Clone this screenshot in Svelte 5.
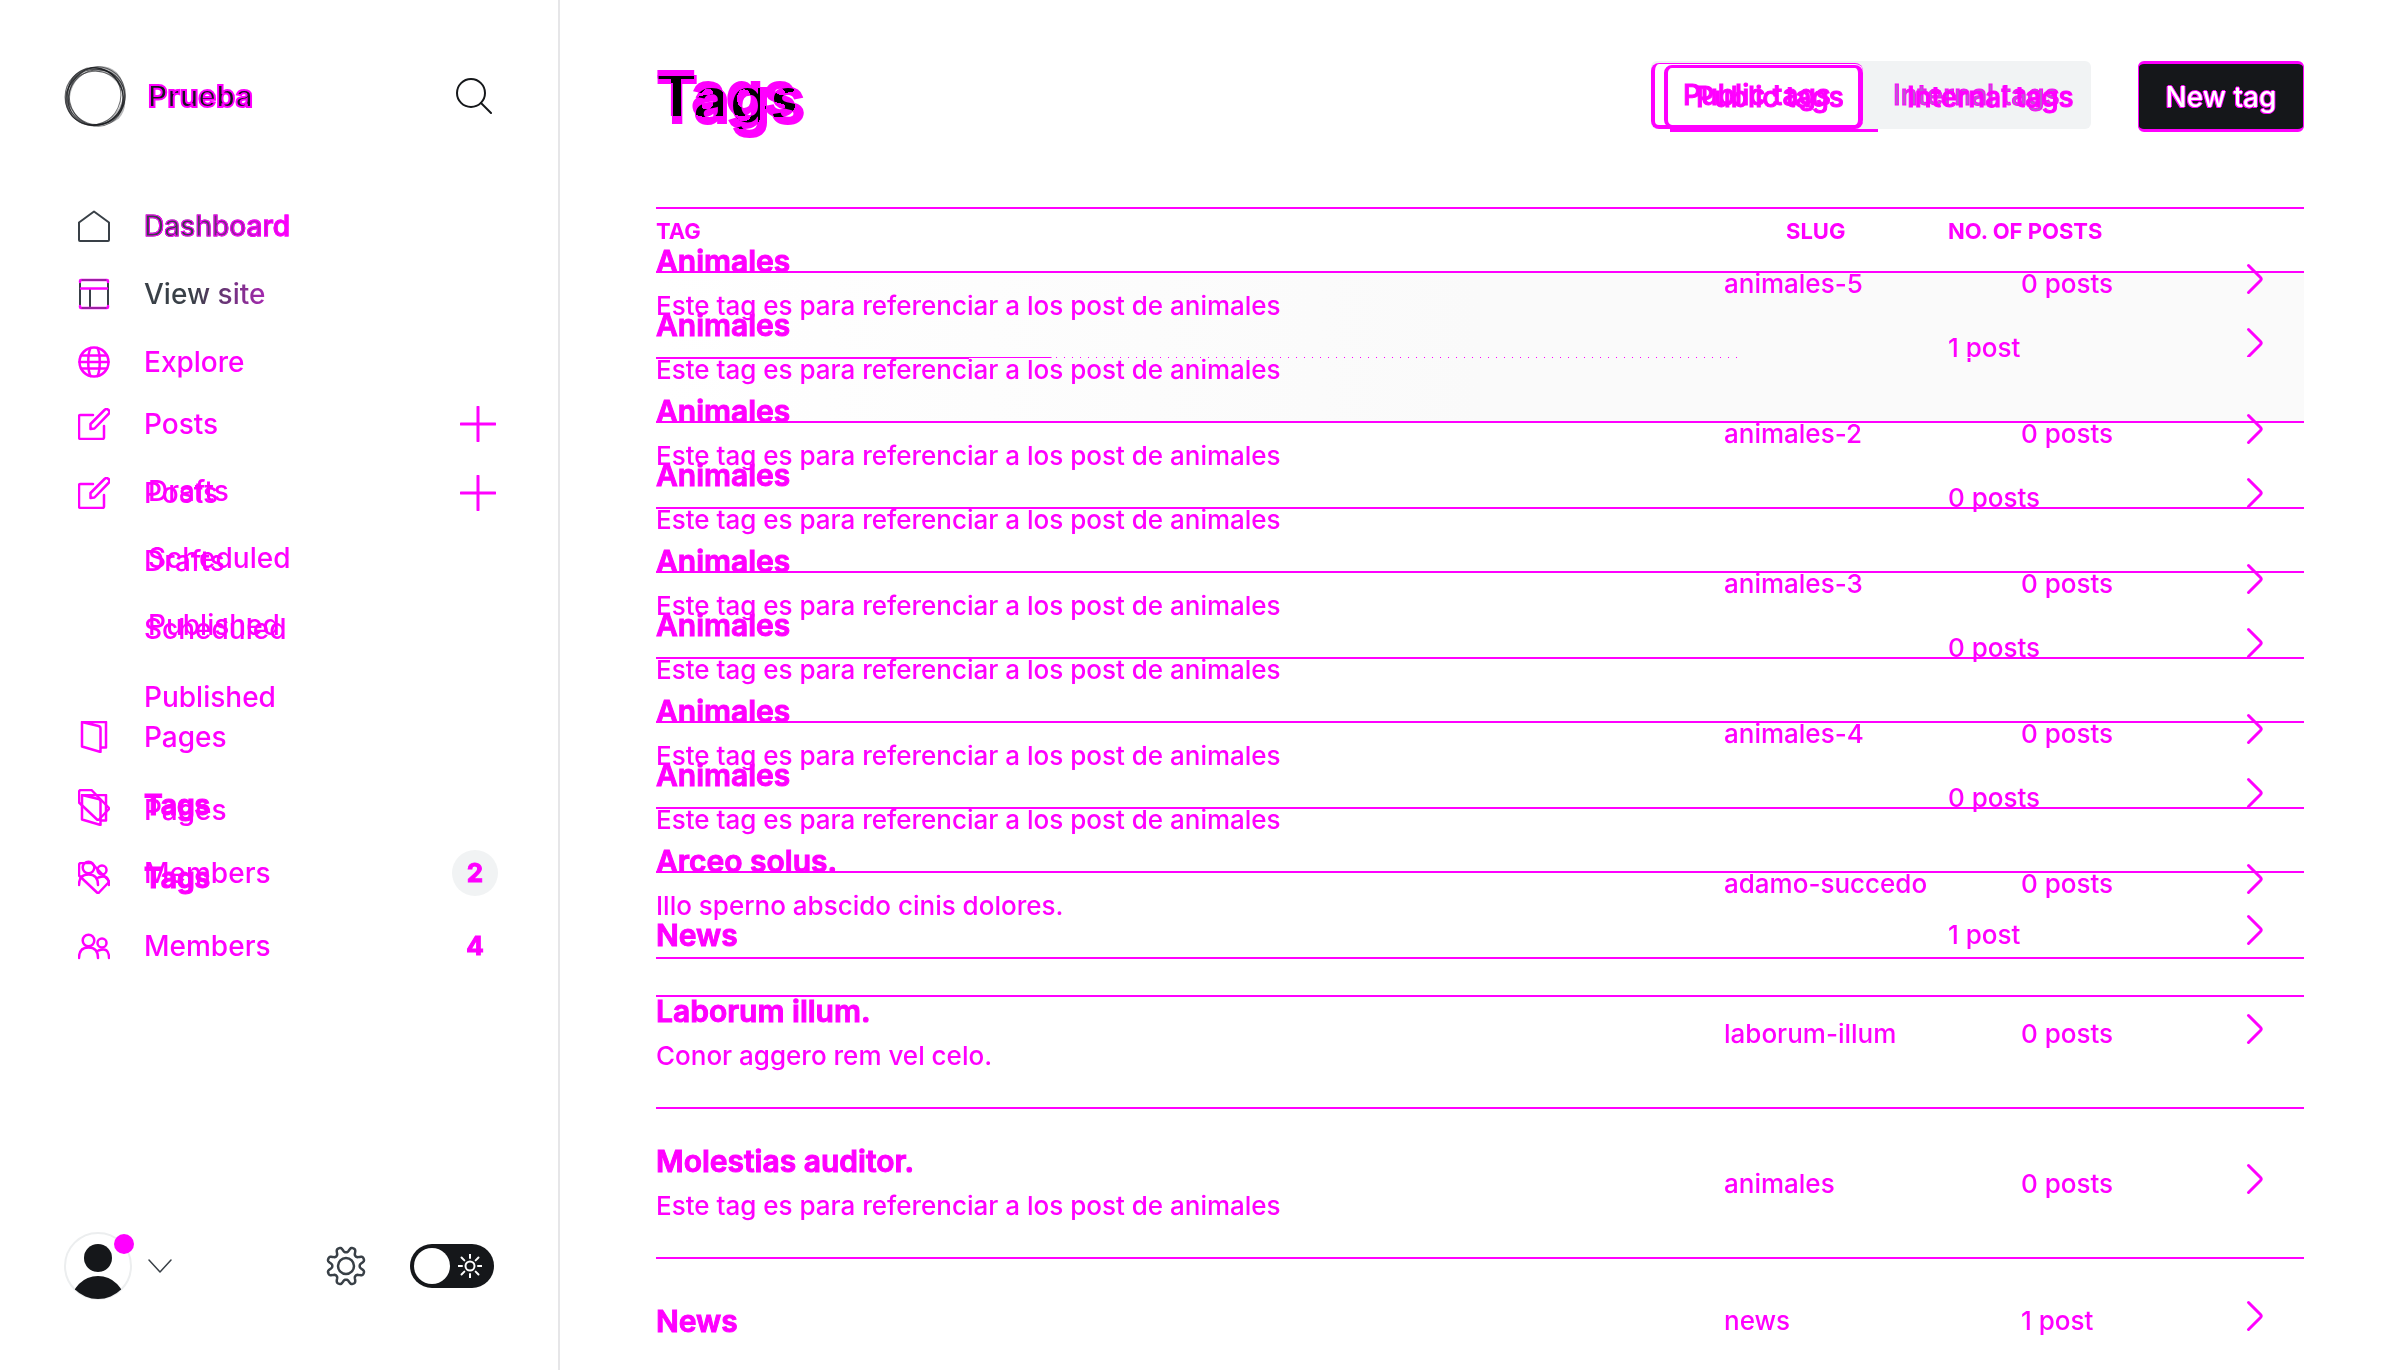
<script>
  const desc = 'Este tag es para referenciar a los post de animales';

  const navBefore = [
    {
      items: [
        { label: 'Posts', icon: 'edit', add: true },
        { label: 'Drafts', sub: true },
        { label: 'Scheduled', sub: true },
        { label: 'Published', sub: true }
      ]
    },
    {
      items: [
        { label: 'Pages', icon: 'pages' },
        { label: 'Tags', icon: 'tag', active: true },
        { label: 'Members', icon: 'members', count: '2', pill: true }
      ]
    }
  ];

  const navAfter = [
    {
      items: [
        { label: 'Dashboard', icon: 'home', tone: 'edged' },
        { label: 'View site', icon: 'layout', tone: 'grazed' },
        { label: 'Explore', icon: 'globe' }
      ]
    },
    {
      items: [
        { label: 'Posts', icon: 'edit', add: true },
        { label: 'Drafts' },
        { label: 'Scheduled' },
        { label: 'Published' }
      ]
    },
    {
      items: [
        { label: 'Pages', icon: 'pages' },
        { label: 'Tags', icon: 'tag', active: true },
        { label: 'Members', icon: 'members', count: '4' }
      ]
    }
  ];

  const rowsBefore = [
    { name: 'Animales', desc, posts: '1 post' },
    { name: 'Animales', desc, posts: '0 posts' },
    { name: 'Animales', desc, posts: '0 posts' },
    { name: 'Animales', desc, posts: '0 posts' },
    { name: 'News', posts: '1 post' }
  ];

  const rowsAfter = [
    { name: 'Animales', desc, slug: 'animales-5', posts: '0 posts' },
    { name: 'Animales', desc, slug: 'animales-2', posts: '0 posts' },
    { name: 'Animales', desc, slug: 'animales-3', posts: '0 posts' },
    { name: 'Animales', desc, slug: 'animales-4', posts: '0 posts' },
    { name: 'Arceo solus.', desc: 'Illo sperno abscido cinis dolores.', slug: 'adamo-succedo', posts: '0 posts' },
    { name: 'Laborum illum.', desc: 'Conor aggero rem vel celo.', slug: 'laborum-illum', posts: '0 posts' },
    { name: 'Molestias auditor.', desc, slug: 'animales', posts: '0 posts' },
    { name: 'News', slug: 'news', posts: '1 post' }
  ];

  // Eight rounded teeth with a notch at twelve o'clock.
  function gearPath() {
    const pts = [];
    for (let i = 0; i < 192; i++) {
      const t = (i / 192) * Math.PI * 2;
      const r = 16.4 - 2.7 * Math.tanh(1.6 * Math.cos(8 * t)) / Math.tanh(1.6);
      pts.push(`${(20 + r * Math.sin(t)).toFixed(2)} ${(20 - r * Math.cos(t)).toFixed(2)}`);
    }
    return 'M' + pts.join('L') + 'Z';
  }
  const gear = gearPath();
  const rays = [0, 45, 90, 135, 180, 225, 270, 315];
  const rings = [
    [29, 31, 28, 28, 0], [29, 31, 26, 28, 25], [32, 30, 26, 28, 50], [30, 31, 26, 29, -30],
    [31, 31, 28, 27, 0], [29, 32, 28, 26, -15], [32, 29, 27, 28, 20]
  ];
</script>

{#snippet icon(name)}
  <svg class="icon" viewBox="0 0 32 32" width="32" height="32" aria-hidden="true">
    {#if name === 'home'}
      <path class="ink" d="M1 12.5 16 1.5 31 12.5V30a1 1 0 0 1-1 1H2a1 1 0 0 1-1-1Z" />
    {:else if name === 'layout'}
      <path class="ink" d="M2 3v26M30 3v26M12 11v18" />
      <path class="hot" d="M2 4V3a1 1 0 0 1 1-1h26a1 1 0 0 1 1 1v1M2 28v1a1 1 0 0 0 1 1h26a1 1 0 0 0 1-1v-1M3 10.500h26" />
      <path class="ink thin" d="M4 2h24M4 30h24" />
    {:else if name === 'globe'}
      <circle class="hot" cx="16" cy="16" r="14.500" />
      <path class="hot" d="M3 9.500h26M1.500 16h29M3 22.500h26M12.500 2C9.500 8 9.500 24 12.500 30M19.500 2C22.500 8 22.500 24 19.500 30" />
    {:else if name === 'edit'}
      <path class="hot" d="M15 7H2.500A1.500 1.500 0 0 0 1 8.500v21A1.500 1.500 0 0 0 2.500 31h22a1.500 1.500 0 0 0 1.500-1.500V18" />
      <path class="hot" d="M12.500 21v-5L26.500 2a2.700 2.700 0 0 1 4 4l-14 14.500-4 .5Z" />
    {:else if name === 'pages'}
      <path class="hot" d="M4 1h24v25.500h-4.500M4 1v24.500l18.500 5.500V7.500q0-2-2-2.500L4 1" />
    {:else if name === 'tag'}
      <path class="hot" d="M3 1h10.500l17 17.500q1 1 0 2L21 30.500q-1 1-2 0L1 13.500V3a2 2 0 0 1 2-2Z" />
    {:else if name === 'members'}
      <circle class="hot" cx="10.500" cy="10.500" r="5.800" />
      <circle class="hot" cx="24" cy="13" r="4.500" />
      <path class="hot" d="M1 28q0-10.500 9.500-10.500T20 28M20.500 20.500Q31 16.500 31 28" />
    {/if}
  </svg>
{/snippet}

{#snippet nav(groups, label)}
  {#each groups as group}
    <ul class="group" aria-label={label}>
      {#each group.items as item}
        <li class="item">
          <a class="link" class:active={item.active} class:sub={item.sub} href="#{item.label.toLowerCase().replace(' ', '-')}">
            <span class="slot">{#if item.icon}{@render icon(item.icon)}{/if}</span>
            <span class="label {item.tone ?? ''}">{item.label}</span>
          </a>
          {#if item.add}
            <button class="add" type="button" aria-label="New post">
              <svg viewBox="0 0 36 36" width="36" height="36" aria-hidden="true"><path d="M18 1v34M1 18h34" /></svg>
            </button>
          {:else if item.count}
            <span class="count" class:pill={item.pill}>{item.count}</span>
          {/if}
        </li>
      {/each}
    </ul>
  {/each}
{/snippet}

{#snippet arrow(name)}
  <a class="arrow" href="#tag" aria-label="Open {name}">
    <svg viewBox="0 0 18 32" width="18" height="32" aria-hidden="true"><path d="M2.500 2.500 14.500 14.500q1.500 1.500 0 3L2.500 29.500" /></svg>
  </a>
{/snippet}

<div class="app">
  <aside class="side">
    <div class="brand">
      <svg class="logo" viewBox="0 0 60 60" width="62" height="62" aria-hidden="true">
        <path class="shade" d="M20 5Q38-4 51 7Q60 17 58 29Q52 14 40 8Q30 5 20 5ZM58 28Q62 42 53 52Q42 60 28 58Q46 54 53 42Q56 36 58 28ZM24 3Q10 6 3 20Q-2 36 8 49Q3 32 9 20Q15 8 24 3Z" />
        {#each rings as [cx, cy, rx, ry, a]}
          <ellipse {cx} {cy} {rx} {ry} transform="rotate({a} 30 30)" />
        {/each}
      </svg>
      <span class="site">Prueba</span>
      <button class="search" type="button" aria-label="Search">
        <svg viewBox="0 0 36 36" width="36" height="36" aria-hidden="true"><circle cx="15" cy="15" r="14" /><path d="m25 25 10 10" /></svg>
      </button>
    </div>

    <nav class="stack menu">
      <div class="layer before">{@render nav(navBefore, 'Before')}</div>
      <div class="layer after">{@render nav(navAfter, 'After')}</div>
    </nav>

    <div class="foot">
      <button class="user" type="button" aria-label="Account">
        <span class="avatar">
          <svg viewBox="0 0 68 68" width="68" height="68" aria-hidden="true">
            <clipPath id="face"><circle cx="34" cy="34" r="33" /></clipPath>
            <circle class="rim" cx="34" cy="34" r="33" />
            <circle class="body" cx="34" cy="26" r="14" />
            <circle class="body" clip-path="url(#face)" cx="34" cy="71" r="27" />
          </svg>
          <span class="dot"></span>
        </span>
        <svg class="caret" viewBox="0 0 24 14" width="24" height="14" aria-hidden="true"><path d="m1 1 11 12L23 1" /></svg>
      </button>
      <button class="settings" type="button" aria-label="Settings">
        <svg viewBox="0 0 40 40" width="40" height="40" aria-hidden="true"><path d={gear} /><circle cx="20" cy="20" r="8" /></svg>
      </button>
      <label class="night">
        <input type="checkbox" aria-label="Night mode" />
        <span class="knob"></span>
        <svg viewBox="0 0 24 24" width="24" height="24" aria-hidden="true">
          <circle cx="12" cy="12" r="4.500" />
          {#each rays as a}<path d="M12 0v4" transform="rotate({a} 12 12)" />{/each}
        </svg>
      </label>
    </div>
  </aside>

  <main class="main">
    <header class="head">
      <div class="stack titles">
        <h1 class="layer title-before">Tags</h1>
        <h1 class="layer title-after">Tags</h1>
      </div>
      <div class="actions">
        <div class="stack">
          <div class="layer seg-before">
            <button class="tab on" type="button">Public tags</button>
            <button class="tab muted" type="button">Internal tags</button>
          </div>
          <div class="layer seg-after">
            <button class="tab on" type="button">Public tags</button>
            <button class="tab muted" type="button">Internal tags</button>
            <span class="underline"></span>
          </div>
        </div>
        <button class="new" type="button">New tag</button>
      </div>
    </header>

    <section class="stack lists">
      <table class="layer list list-before">
        <colgroup><col /><col class="c-slug" /><col class="c-posts" /><col class="c-arrow" /></colgroup>
        <thead>
          <tr><th scope="col">TAG</th><th scope="col">SLUG</th><th scope="col">NO. OF POSTS</th><th></th></tr>
        </thead>
        <tbody>
          {#each rowsBefore as row}
            <tr class:short={!row.desc}>
              <td>
                <div class="name">{row.name}</div>
                {#if row.desc}<div class="desc">{row.desc}</div>{/if}
              </td>
              <td></td>
              <td>{row.posts}</td>
              <td>{@render arrow(row.name)}</td>
            </tr>
          {/each}
        </tbody>
      </table>

      <table class="layer list list-after">
        <colgroup><col /><col class="c-slug" /><col class="c-posts" /><col class="c-arrow" /></colgroup>
        <tbody>
          {#each rowsAfter as row}
            <tr class:short={!row.desc}>
              <td>
                <div class="name">{row.name}</div>
                {#if row.desc}<div class="desc">{row.desc}</div>{/if}
              </td>
              <td>{row.slug}</td>
              <td>{row.posts}</td>
              <td>{@render arrow(row.name)}</td>
            </tr>
          {/each}
        </tbody>
      </table>
    </section>
  </main>
</div>

<style>
  :global(body) {
    background: #fff;
    font-family: Inter, 'Liberation Sans', sans-serif;
  }
  .app {
    --hot: #ff00ff;
    --ink: #15171a;
    --grey: #394047;
    display: flex;
    height: 100vh;
    overflow: hidden;
    color: var(--hot);
    font-size: 28px;
    font-weight: 500;
  }
  .app * {
    box-sizing: border-box;
  }
  button {
    padding: 0;
    border: 0;
    background: none;
    color: inherit;
    font: inherit;
  }
  svg {
    display: block;
    fill: none;
    stroke-linecap: round;
    stroke-linejoin: round;
  }
  a {
    color: inherit;
    text-decoration: none;
  }
  .stack {
    display: grid;
  }
  .layer {
    grid-area: 1 / 1;
  }

  .side {
    display: flex;
    flex-direction: column;
    flex: none;
    width: 560px;
    padding: 65px 60px 70px 64px;
    border-right: 2px solid #e6e6e8;
  }
  .brand {
    display: flex;
    align-items: center;
    height: 62px;
  }
  .logo {
    stroke: #15171a;
    stroke-width: 1;
    stroke-opacity: 0.6;
  }
  .logo .shade {
    fill: #15171a;
    fill-opacity: 0.3;
    stroke: none;
  }
  .site {
    flex: 1;
    margin-left: 22px;
    -webkit-text-stroke: 2px var(--hot);
    color: var(--ink);
    font-size: 30px;
    font-weight: 700;
  }
  .search {
    margin-right: 6px;
    stroke: var(--ink);
    stroke-width: 2;
  }
  .menu {
    margin-top: 65px;
  }
  .group {
    margin: 0;
    padding: 0;
    list-style: none;
  }
  .before {
    padding-top: 198px;
  }
  .before .item {
    height: 67px;
  }
  .before .group + .group {
    margin-top: 45px;
  }
  .before .group + .group .item {
    height: 68px;
  }
  .after .item {
    height: 68px;
  }
  .after .group + .group {
    margin-top: 63px;
  }
  .after .group + .group + .group {
    margin-top: 45px;
  }
  .item {
    display: flex;
    align-items: center;
    padding: 0 0 0 14px;
  }
  .link {
    display: flex;
    flex: 1;
    align-items: center;
    gap: 34px;
  }
  .link.sub {
    gap: 38px;
  }
  .slot {
    width: 32px;
  }
  .active {
    -webkit-text-stroke: 1px var(--hot);
    font-weight: 700;
  }
  /* Ink on the left that gives way to the highlight. */
  .label.edged,
  .label.grazed {
    background: linear-gradient(90deg, var(--grey) 30%, var(--hot));
    background-clip: text;
    color: transparent;
  }
  .label.edged {
    -webkit-text-stroke: 1px var(--hot);
  }
  .label.grazed {
    background-image: linear-gradient(90deg, var(--grey) 40%, #a528b0);
  }
  .ink {
    stroke: var(--grey);
    stroke-width: 2;
  }
  .thin {
    stroke-width: 1;
  }
  .hot {
    stroke: var(--hot);
    stroke-width: 2.5;
  }
  .add {
    margin-right: 2px;
    stroke: var(--hot);
    stroke-width: 3;
  }
  .count {
    width: 46px;
    height: 46px;
    border-radius: 50%;
    -webkit-text-stroke: 1px var(--hot);
    font-size: 26px;
    font-weight: 700;
    line-height: 46px;
    text-align: center;
  }
  .pill {
    background: #f1f3f4;
  }

  .foot {
    display: flex;
    align-items: center;
    margin-top: auto;
    padding-right: 4px;
  }
  .user {
    display: flex;
    flex: 1;
    align-items: center;
    gap: 16px;
  }
  .avatar {
    position: relative;
  }
  .rim {
    stroke: #eceeef;
    stroke-width: 2;
  }
  .body {
    fill: var(--ink);
  }
  .dot {
    position: absolute;
    top: 2px;
    right: -2px;
    width: 20px;
    height: 20px;
    border-radius: 50%;
    background: var(--hot);
  }
  .caret,
  .settings {
    stroke: var(--grey);
    stroke-width: 1.5;
  }
  .settings {
    stroke-width: 2.5;
  }
  .night {
    display: flex;
    align-items: center;
    justify-content: space-between;
    width: 84px;
    height: 44px;
    margin-left: 44px;
    padding: 0 12px 0 4px;
    border-radius: 22px;
    background: var(--ink);
    stroke: #fff;
    stroke-width: 2;
  }
  .night input {
    position: absolute;
    opacity: 0;
  }
  .knob {
    width: 36px;
    height: 36px;
    border-radius: 50%;
    background: #fff;
  }

  .main {
    flex: 1;
    min-width: 0;
    padding: 61px 96px 0;
  }
  .head {
    display: flex;
    justify-content: space-between;
    height: 71px;
  }
  .titles {
    align-items: start;
  }
  h1 {
    margin: 0;
    font-weight: 600;
  }
  .title-before {
    -webkit-text-stroke: 2px #fe00fe;
    color: #fe00fe;
    font-size: 60px;
    line-height: 64px;
  }
  .title-after,
  .titles::before {
    grid-area: 1 / 1;
    padding-top: 4px;
    font-size: 64px;
    font-weight: 600;
    line-height: 70px;
  }
  /* Turns the area shared by both titles black and leaves white alone. */
  .titles::before {
    content: 'Tags';
    color: #010101;
    mix-blend-mode: color-burn;
  }
  .title-after {
    -webkit-text-stroke: 2px var(--hot);
    mix-blend-mode: multiply;
  }
  .actions {
    display: flex;
    align-items: start;
    gap: 47px;
  }
  .actions .stack {
    width: 440px;
  }
  .seg-before {
    display: flex;
    height: 68px;
    border-radius: 6px;
    background: #f1f3f4;
  }
  .tab {
    -webkit-text-stroke: 1px var(--hot);
  }
  .tab.on {
    width: 212px;
    border: 0 solid var(--hot);
    border-radius: 8px;
    background: #fff;
    text-align: left;
  }
  .seg-before .on {
    height: 66px;
    margin-top: 2px;
    padding-left: 28px;
    border-width: 1px 0 4px 4px;
  }
  .seg-after {
    display: grid;
    grid-template-columns: 199px 1fr;
    align-content: start;
    padding: 4px 0 0 13px;
  }
  .seg-after .tab {
    height: 63px;
  }
  .seg-after .on {
    width: 199px;
    padding-left: 28px;
    border-width: 3px 5px 3px 4px;
    background: none;
  }
  .tab.muted {
    text-align: left;
    white-space: nowrap;
  }
  .seg-before .muted {
    padding-left: 30px;
    color: #b760cc;
  }
  .seg-after .muted {
    padding-left: 44px;
  }
  .underline {
    grid-column: 1 / -1;
    width: 208px;
    height: 3px;
    margin: 1px 0 0 6px;
    background: var(--hot);
  }
  .new {
    width: 166px;
    height: 71px;
    border: solid var(--hot);
    border-width: 3px 1px;
    border-radius: 6px;
    background: var(--ink);
    color: #fff;
    text-shadow: 1px 0 var(--hot), -1px 0 var(--hot), 0 1px var(--hot), -1px 1px var(--hot), 0 -1px var(--hot);
  }

  .lists {
    margin-top: 75px;
    align-items: start;
  }
  .list {
    width: 100%;
    table-layout: fixed;
    border-spacing: 0;
    border-collapse: separate;
    font-size: 26px;
  }
  .list td {
    height: 150px;
    padding: 2px 0 0;
    border-bottom: 2px solid var(--hot);
    vertical-align: middle;
    line-height: 32px;
  }
  .list .short td {
    height: 124px;
  }
  .list th {
    height: 66px;
    padding: 12px 0 0;
    border-bottom: 2px solid var(--hot);
    font-size: 22px;
    font-weight: 700;
    line-height: 24px;
    text-align: left;
    vertical-align: top;
  }
  .list .name {
    -webkit-text-stroke: 1px var(--hot);
    font-size: 30px;
    font-weight: 600;
    line-height: 44px;
  }
  .list .desc {
    line-height: 46px;
    white-space: nowrap;
  }
  .list-before .c-slug {
    width: 162px;
  }
  .list-before .c-posts {
    width: 298px;
  }
  .list-after {
    border-top: 2px solid var(--hot);
  }
  .list-after .c-slug {
    width: 297px;
  }
  .list-after .c-posts {
    width: 225px;
  }
  .c-arrow {
    width: 58px;
  }
  .list-before tbody tr:first-child {
    background: linear-gradient(90deg, #fff, #fafafa 50%);
  }
  /* The first rule thins out and ends in sparse dots. */
  .list-after tr:first-child td {
    border-bottom-color: transparent;
  }
  .list-after tr:first-child {
    background:
      linear-gradient(var(--hot), var(--hot)) 0 100% / 19% 2px no-repeat,
      linear-gradient(var(--hot), var(--hot)) 0 148px / 24% 1px no-repeat,
      linear-gradient(90deg, transparent 66%, #fafafa 66%) 0 148px / 100% 1px no-repeat,
      linear-gradient(90deg, var(--hot) 1px, transparent 1px) 0 148px / 8px 1px repeat-x;
  }
  .arrow svg {
    margin-top: -10px;
    stroke: var(--hot);
    stroke-width: 3;
  }
</style>
